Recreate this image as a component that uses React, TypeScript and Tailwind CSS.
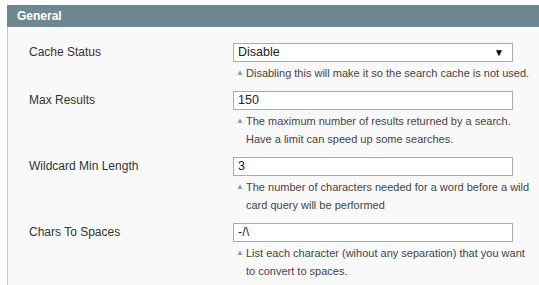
const rows = [
  { label: "Cache Status", value: "Disable", select: true, hint: ["Disabling this will make it so the search cache is not used."] },
  { label: "Max Results", value: "150", hint: ["The maximum number of results returned by a search.", "Have a limit can speed up some searches."] },
  { label: "Wildcard Min Length", value: "3", hint: ["The number of characters needed for a word before a wild", "card query will be performed"] },
  { label: "Chars To Spaces", value: "-/\\", hint: ["List each character (wihout any separation) that you want", "to convert to spaces."] },
];

export default function App() {
  return (
    <div className="w-[539px] h-[285px] bg-white pt-[5px] pl-[7px] overflow-hidden font-['Liberation_Sans',Arial,sans-serif] text-[#333]">
      <div className="h-[22px] bg-[#6f8790] text-white text-[12px] font-bold leading-[22px] pl-[10px]">General</div>
      <div className="border-l border-[#c8c8c8] bg-[#f9f9f9] h-[258px] pt-[16px]">
        {rows.map((r) => (
          <div key={r.label} className="flex pb-[9px]">
            <div className="w-[225px] pl-[21px] text-[12px] leading-[19px]">{r.label}</div>
            <div className="w-[280px]">
              <div className="h-[19px] border border-[#aaa] bg-white flex items-center justify-between pl-[4px] pr-[8px] text-[12.5px] text-[#222]">
                <span>{r.value}</span>
                {r.select && <span className="text-[10px] text-black">▼</span>}
              </div>
              <div className="mt-[2px] text-[11px] leading-[18px] text-[#444] whitespace-nowrap">
                {r.hint.map((h, i) => (
                  <div key={i} className="flex">
                    <span className="w-[13px] shrink-0 pl-[3px] text-[8px] text-[#999]">{i === 0 ? "▲" : ""}</span>
                    <span>{h}</span>
                  </div>
                ))}
              </div>
            </div>
          </div>
        ))}
      </div>
    </div>
  );
}
